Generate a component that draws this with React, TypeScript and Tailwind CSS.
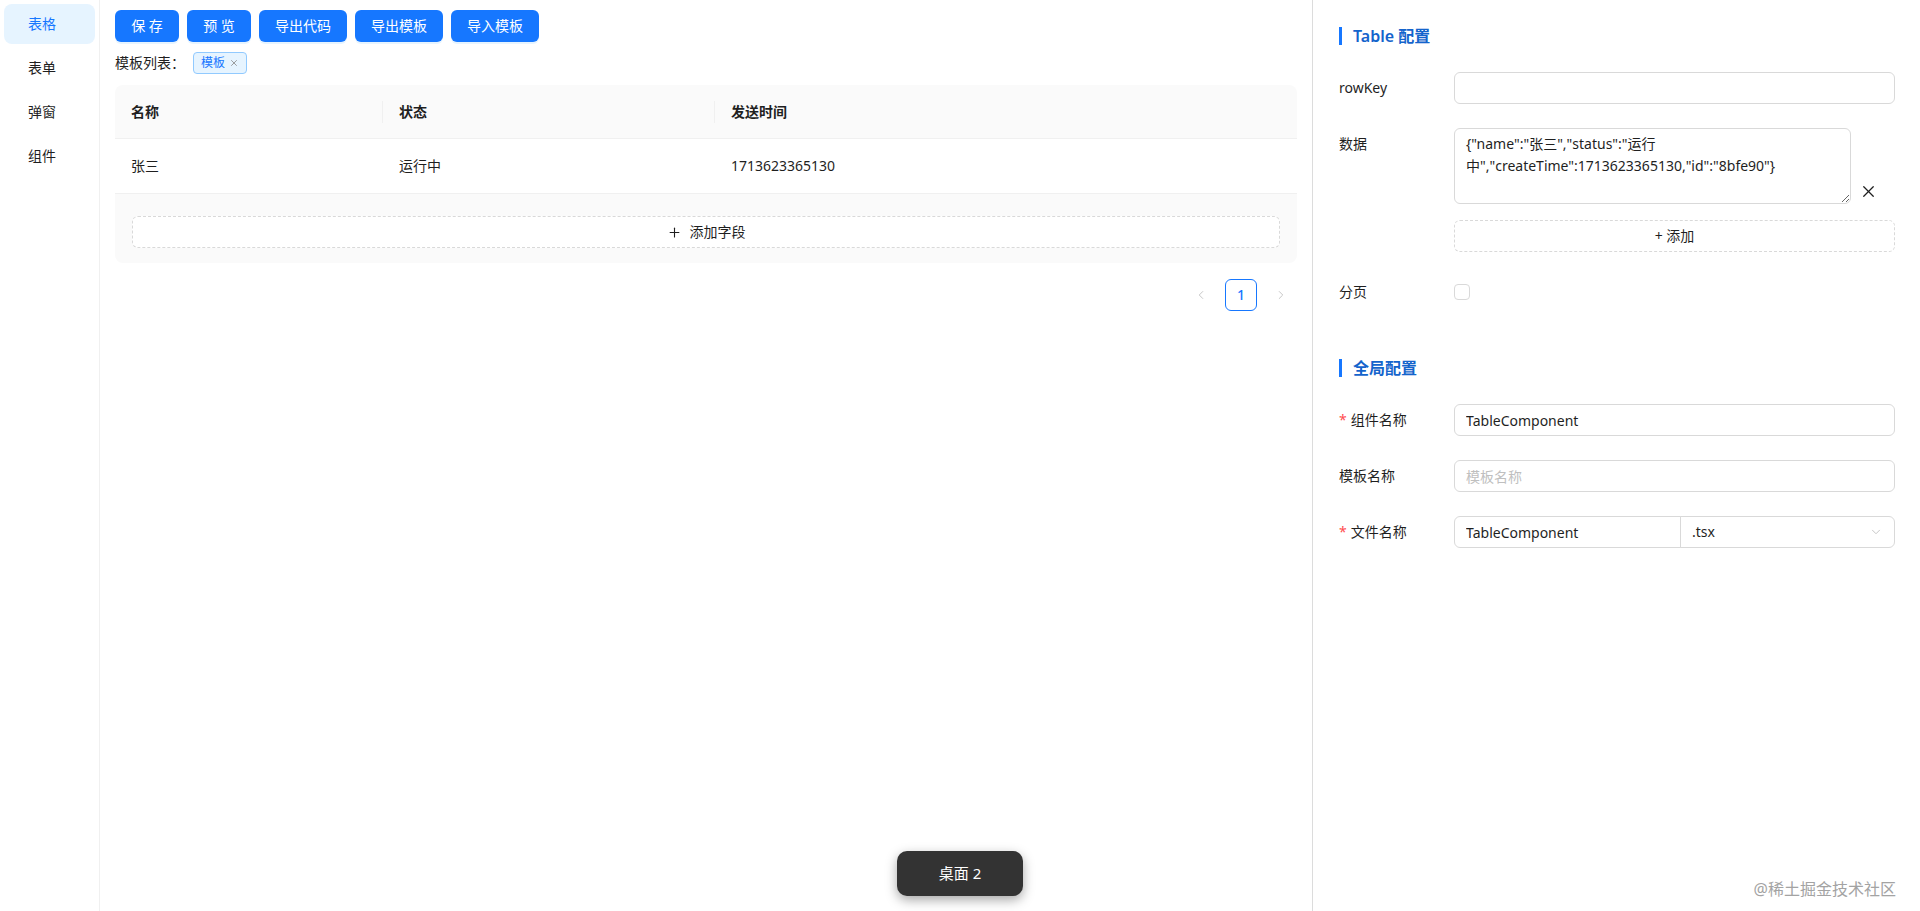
import { ChevronDown, ChevronLeft, ChevronRight, Plus, X } from "lucide-react";

const menu = ["表格", "表单", "弹窗", "组件"];

const actions = [
  { label: "保 存", width: "w-[64px]" },
  { label: "预 览", width: "w-[64px]" },
  { label: "导出代码", width: "w-[88px]" },
  { label: "导出模板", width: "w-[88px]" },
  { label: "导入模板", width: "w-[88px]" },
];

const columns = ["名称", "状态", "发送时间"];
const row = ["张三", "运行中", "1713623365130"];

const dataValue = '{"name":"张三","status":"运行中","createTime":1713623365130,"id":"8bfe90"}';

function SectionTitle({ children }: { children: React.ReactNode }) {
  return (
    <div className="flex h-6 items-center">
      <span className="h-[18px] w-[3px] bg-[#1677ff]" />
      <span className="ml-[11px] text-base font-semibold text-[#1464cc]">{children}</span>
    </div>
  );
}

function FormItem({
  label,
  required,
  top,
  children,
}: {
  label: string;
  required?: boolean;
  top?: boolean;
  children: React.ReactNode;
}) {
  return (
    <div className={`flex ${top ? "items-start" : "items-center"}`}>
      <div className="flex h-8 w-[115px] shrink-0 items-center text-sm text-[#1f1f1f]">
        {required && <span className="mr-[4px] text-[#ff4d4f]">*</span>}
        {label}
      </div>
      <div className="min-w-0 flex-1">{children}</div>
    </div>
  );
}

export default function App() {
  return (
    <div className="relative flex h-[911px] w-full overflow-hidden bg-white font-['Noto_Sans','Noto_Sans_CJK_SC',sans-serif] text-sm text-[#1f1f1f]">
      {/* side menu */}
      <aside className="w-[100px] shrink-0 border-r border-[#f0f0f0] pt-1">
        {menu.map((item, i) => (
          <div
            key={item}
            className={`mx-1 mb-1 flex h-10 items-center rounded-lg pl-6 ${
              i === 0 ? "bg-[#e6f4ff] text-[#1677ff]" : "text-[#1f1f1f]"
            }`}
          >
            {item}
          </div>
        ))}
      </aside>

      {/* main */}
      <main className="min-w-0 flex-1 px-[15px] pt-[10px]">
        <div className="flex gap-2">
          {actions.map(({ label, width }) => (
            <button
              key={label}
              className={`h-8 ${width} rounded-md bg-[#1677ff] text-sm text-white shadow-[0_2px_0_rgba(5,145,255,0.1)]`}
            >
              {label}
            </button>
          ))}
        </div>

        <div className="mt-[10px] flex h-[22px] items-center">
          <span>模板列表：</span>
          <span className="ml-[8px] flex h-[22px] items-center gap-1 rounded border border-[#91caff] bg-[#e6f4ff] px-[7px] text-xs text-[#1677ff]">
            模板
            <X className="h-[10px] w-[10px] text-[#8c8c8c]" strokeWidth={2} />
          </span>
        </div>

        <div className="mt-[11px] rounded-lg">
          <div className="grid h-[54px] grid-cols-[268px_332px_1fr] rounded-t-lg border-b border-[#f0f0f0] bg-[#fafafa] font-semibold">
            {columns.map((col, i) => (
              <div key={col} className="relative flex items-center px-4">
                {col}
                {i < columns.length - 1 && (
                  <span className="absolute right-0 top-1/2 h-[22px] w-px -translate-y-1/2 bg-[#f0f0f0]" />
                )}
              </div>
            ))}
          </div>
          <div className="grid h-[55px] grid-cols-[268px_332px_1fr] border-b border-[#f0f0f0]">
            {row.map((cell) => (
              <div key={cell} className="flex items-center px-4">
                {cell}
              </div>
            ))}
          </div>
          <div className="rounded-b-lg bg-[#fafafa] px-[17px] pb-[15px] pt-[22px]">
            <button className="flex h-8 w-full items-center justify-center gap-2 rounded-md border border-dashed border-[#d9d9d9] bg-white">
              <Plus className="h-[15px] w-[15px]" strokeWidth={1.75} />
              添加字段
            </button>
          </div>
        </div>

        <div className="mt-4 flex justify-end gap-2">
          <div className="flex h-8 w-8 items-center justify-center text-[#bfbfbf]">
            <ChevronLeft className="h-[14px] w-[14px]" strokeWidth={1.5} />
          </div>
          <div className="flex h-8 w-8 items-center justify-center rounded-md border border-[#1677ff] font-medium text-[#1677ff]">
            1
          </div>
          <div className="flex h-8 w-8 items-center justify-center text-[#bfbfbf]">
            <ChevronRight className="h-[14px] w-[14px]" strokeWidth={1.5} />
          </div>
        </div>
      </main>

      {/* config panel */}
      <section className="w-[608px] shrink-0 border-l border-[#dcdcdc] pl-[26px] pr-[25px] pt-6">
        <SectionTitle>Table 配置</SectionTitle>

        <div className="mt-6 flex flex-col gap-6">
          <FormItem label="rowKey">
            <input className="h-8 w-full rounded-md border border-[#d9d9d9] px-[11px] outline-none" />
          </FormItem>

          <FormItem label="数据" top>
            <div className="flex items-end">
              <textarea
                readOnly
                value={dataValue}
                className="h-[76px] w-[397px] rounded-md border border-[#d9d9d9] px-[11px] py-[4px] leading-[22px] outline-none"
              />
              <X className="mb-[3px] ml-[8px] h-[19px] w-[19px] text-[#1f1f1f]" strokeWidth={1.6} />
            </div>
            <button className="mt-4 h-8 w-full rounded-md border border-dashed border-[#d9d9d9] bg-white">
              + 添加
            </button>
          </FormItem>

          <FormItem label="分页">
            <span className="block h-4 w-4 rounded border border-[#d9d9d9] bg-white" />
          </FormItem>
        </div>

        <div className="mt-12">
          <SectionTitle>全局配置</SectionTitle>
        </div>

        <div className="mt-6 flex flex-col gap-6">
          <FormItem label="组件名称" required>
            <input
              readOnly
              value="TableComponent"
              className="h-8 w-full rounded-md border border-[#d9d9d9] px-[11px] outline-none"
            />
          </FormItem>

          <FormItem label="模板名称">
            <input
              placeholder="模板名称"
              className="h-8 w-full rounded-md border border-[#d9d9d9] px-[11px] outline-none placeholder:text-[#bfbfbf]"
            />
          </FormItem>

          <FormItem label="文件名称" required>
            <div className="flex h-8">
              <input
                readOnly
                value="TableComponent"
                className="h-8 w-[227px] rounded-l-md border border-[#d9d9d9] px-[11px] outline-none"
              />
              <div className="-ml-px flex h-8 flex-1 items-center justify-between rounded-r-md border border-[#d9d9d9] pl-[11px] pr-[11px]">
                <span>.tsx</span>
                <ChevronDown className="h-[14px] w-[14px] text-[#bfbfbf]" strokeWidth={1.5} />
              </div>
            </div>
          </FormItem>
        </div>
      </section>

      {/* overlays */}
      <div className="absolute bottom-[15px] left-1/2 flex h-[45px] w-[126px] -translate-x-1/2 items-center justify-center rounded-[10px] bg-[#333333] text-[15px] text-white shadow-[0_4px_12px_rgba(0,0,0,0.35)]">
        桌面 2
      </div>
      <div className="absolute bottom-[10px] right-[24px] text-base text-[#a3a3a3]">@稀土掘金技术社区</div>
    </div>
  );
}
